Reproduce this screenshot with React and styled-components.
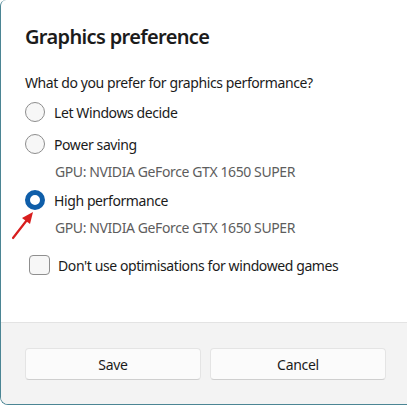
import React from 'react'
import styled, { createGlobalStyle } from 'styled-components'

const GlobalStyle = createGlobalStyle`
  html, body {
    margin: 0;
    padding: 0;
    background: #ffffff;
    overflow: hidden;
  }
  body {
    font-family: "Noto Sans", "Open Sans", sans-serif;
    color: #1b1b1b;
  }
`

const Dialog = styled.div`
  position: relative;
  box-sizing: border-box;
  width: 100%;
  height: 405px;
  border-left: 1px solid #4b8594;
  border-bottom: 1px solid #4b8594;
  border-radius: 6px 0 0 8px;
  background: #ffffff;
  display: flex;
  flex-direction: column;
  overflow: hidden;
`

const Content = styled.div`
  flex: 1;
  padding: 23px 23px 0 24px;
  display: flex;
  flex-direction: column;
`

const Title = styled.h1`
  margin: 0;
  font-size: 20px;
  line-height: 28px;
  font-weight: 600;
  letter-spacing: -0.65px;
`

const Question = styled.p`
  margin: 22px 0 3px;
  font-size: 14px;
  line-height: 20px;
  letter-spacing: -0.4px;
`

const OptionRow = styled.label`
  display: flex;
  align-items: center;
  height: 32px;
  gap: 9px;
  font-size: 14px;
  letter-spacing: -0.4px;
`

const Radio = styled.span`
  box-sizing: border-box;
  width: 20px;
  height: 20px;
  border-radius: 50%;
  flex-shrink: 0;
  border: ${(p) => (p.$checked ? '5px solid #0f5ea9' : '1px solid #8d8d8d')};
  background: ${(p) => (p.$checked ? '#ffffff' : '#f7f7f7')};
`

const Detail = styled.div`
  font-size: 14px;
  line-height: 20px;
  letter-spacing: -0.4px;
  color: #5d5d5d;
  padding-left: 30px;
  margin: 2px 0 2px;
`

const CheckRow = styled.label`
  display: flex;
  align-items: center;
  gap: 8px;
  height: 32px;
  margin-top: 9px;
  padding-left: 4px;
  font-size: 14px;
  letter-spacing: -0.4px;
`

const CheckBox = styled.span`
  box-sizing: border-box;
  width: 21px;
  height: 20px;
  border-radius: 4px;
  border: 1px solid #8f8f8f;
  background: #f7f7f7;
`

const Footer = styled.div`
  box-sizing: border-box;
  height: 82px;
  padding: 25px 22px 0 24px;
  background: #f3f3f3;
  border-top: 1px solid #e3e3e3;
  display: grid;
  grid-template-columns: 176px 176px;
  gap: 9px;
  align-content: start;
`

const Button = styled.button`
  box-sizing: border-box;
  height: 32px;
  border: 1px solid #e4e4e4;
  border-bottom-color: #cfcfcf;
  border-radius: 4px;
  background: #fbfbfb;
  font-family: inherit;
  font-size: 14px;
  letter-spacing: -0.3px;
  color: #1b1b1b;
`

const Arrow = styled.svg`
  position: absolute;
  left: 7px;
  top: 209px;
`

const options = [
  { label: 'Let Windows decide' },
  { label: 'Power saving', gpu: 'GPU: NVIDIA GeForce GTX 1650 SUPER' },
  { label: 'High performance', gpu: 'GPU: NVIDIA GeForce GTX 1650 SUPER', checked: true },
]

export default function App() {
  return (
    <>
      <GlobalStyle />
      <Dialog>
        <Content>
          <Title>Graphics preference</Title>
          <Question>What do you prefer for graphics performance?</Question>
          {options.map((o) => (
            <React.Fragment key={o.label}>
              <OptionRow>
                <Radio $checked={o.checked} />
                {o.label}
              </OptionRow>
              {o.gpu && <Detail>{o.gpu}</Detail>}
            </React.Fragment>
          ))}
          <CheckRow>
            <CheckBox />
            Don't use optimisations for windowed games
          </CheckRow>
        </Content>
        <Footer>
          <Button>Save</Button>
          <Button>Cancel</Button>
        </Footer>
        {/* red annotation arrow */}
        <Arrow width="30" height="34" viewBox="0 0 30 34">
          <line x1="5" y1="29" x2="19" y2="11" stroke="#d81e1e" strokeWidth="2.2" strokeLinecap="round" />
          <polygon points="25,3 14,9 22,15" fill="#d81e1e" />
        </Arrow>
      </Dialog>
    </>
  )
}
